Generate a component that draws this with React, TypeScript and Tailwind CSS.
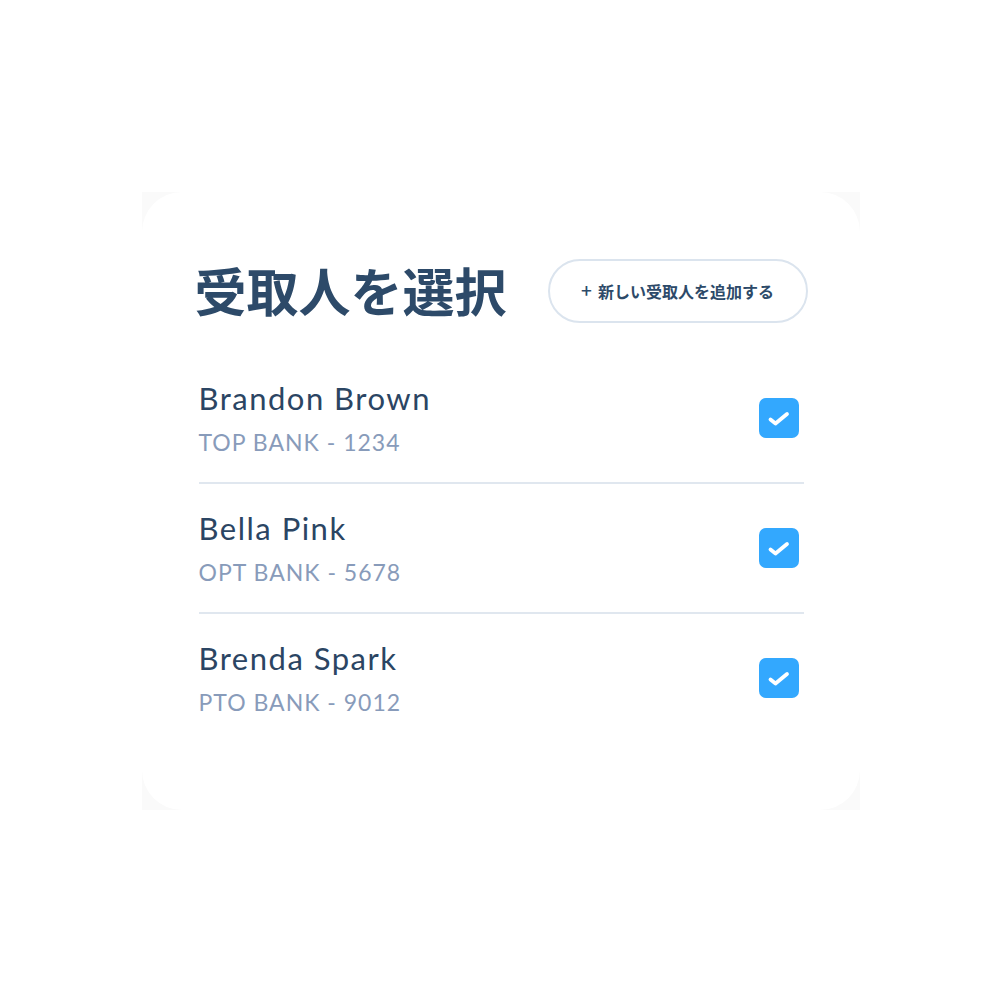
const recipients = [
  { id: 1, name: "Brandon Brown", bank: "TOP BANK - 1234" },
  { id: 2, name: "Bella Pink", bank: "OPT BANK - 5678" },
  { id: 3, name: "Brenda Spark", bank: "PTO BANK - 9012" },
]

const CheckBox = () => (
  <div className="w-10 h-10 rounded-[7px] bg-[#33a8fe] flex items-center justify-center">
    <svg width="40" height="40" viewBox="0 0 40 40" fill="none">
      <polyline
        points="11.5,21.5 16.5,25.5 28,16"
        stroke="white"
        strokeWidth="3.8"
        strokeLinecap="round"
        strokeLinejoin="round"
      />
    </svg>
  </div>
)

const App = () => {
  return (
    <div className="w-full h-[1001px] bg-white flex items-center justify-center font-['Lato','Noto_Sans_CJK_JP',sans-serif]">
      <div className="w-[718px] h-[618px] bg-[#fafafa]">
        <div className="w-full h-full bg-white rounded-[40px] pt-[67px] pl-[57px] pr-[56px]">
          {/* Header */}
          <div className="flex items-center justify-between -mr-1 h-16">
            <h1 className="text-[52px] leading-none font-bold text-[#2d4a69] font-['Noto_Sans_CJK_JP',sans-serif] -ml-[4px] -mt-[2px]">
              受取人を選択
            </h1>
            <button className="w-[260px] h-16 rounded-full border-2 border-[#dbe4ee] flex items-center justify-center gap-[6px] text-[16px] font-bold text-[#2d4a69] font-['Noto_Sans_CJK_JP',sans-serif]">
              <span className="text-[19px] font-medium leading-none -mt-[2px]">+</span>
              <span>新しい受取人を追加する</span>
            </button>
          </div>
          {/* List */}
          <div className="mt-[31px]">
            {recipients.map((item, i) => (
              <div key={item.id}>
                {i > 0 && <div className="h-[2px] bg-[#e0e7ef]" />}
                <div className="flex items-center justify-between py-6 pr-[5px]">
                  <div className="flex flex-col">
                    <span className="text-[31px] leading-[40px] tracking-[1.5px] text-[#2b4563]">{item.name}</span>
                    <span className="mt-2 text-[23px] leading-[32px] tracking-[1px] text-[#889bba]">{item.bank}</span>
                  </div>
                  <CheckBox />
                </div>
              </div>
            ))}
          </div>
        </div>
      </div>
    </div>
  )
}

export default App
